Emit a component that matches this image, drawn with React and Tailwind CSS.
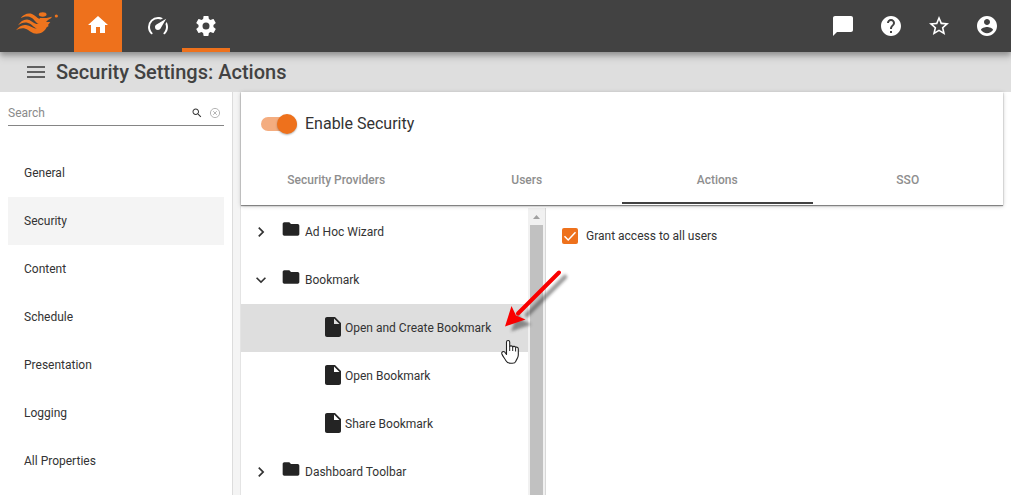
const ICONS = {
  home: 'M10 20v-6h4v6h5v-8h3L12 3 2 12h3v8z',
  gauge:
    'M12,16A3,3 0 0,1 9,13C9,11.88 9.61,10.9 10.5,10.39L20.21,4.77L14.68,14.35C14.18,15.33 13.17,16 12,16M12,3C13.81,3 15.5,3.5 16.97,4.32L14.87,5.53C14,5.19 13,5 12,5A8,8 0 0,0 4,13C4,15.21 4.89,17.21 6.34,18.65H6.35C6.74,19.04 6.74,19.67 6.35,20.06C5.96,20.45 5.32,20.45 4.93,20.07V20.07C3.12,18.26 2,15.76 2,13A10,10 0 0,1 12,3M22,13C22,15.76 20.88,18.26 19.07,20.07V20.07C18.68,20.45 18.05,20.45 17.66,20.06C17.27,19.67 17.27,19.04 17.66,18.65V18.65C19.11,17.2 20,15.21 20,13C20,12 19.81,11 19.46,10.1L20.67,8C21.5,9.5 22,11.18 22,13Z',
  gear:
    'M12,15.5A3.5,3.5 0 0,1 8.5,12A3.5,3.5 0 0,1 12,8.5A3.5,3.5 0 0,1 15.5,12A3.5,3.5 0 0,1 12,15.5M19.43,12.97C19.47,12.65 19.5,12.33 19.5,12C19.5,11.67 19.47,11.34 19.43,11L21.54,9.37C21.73,9.22 21.78,8.95 21.66,8.73L19.66,5.27C19.54,5.05 19.27,4.96 19.05,5.05L16.56,6.05C16.04,5.66 15.5,5.32 14.87,5.07L14.5,2.42C14.46,2.18 14.25,2 14,2H10C9.75,2 9.54,2.18 9.5,2.42L9.13,5.07C8.5,5.32 7.96,5.66 7.44,6.05L4.95,5.05C4.73,4.96 4.46,5.05 4.34,5.27L2.34,8.73C2.21,8.95 2.27,9.22 2.46,9.37L4.57,11C4.53,11.34 4.5,11.67 4.5,12C4.5,12.33 4.53,12.65 4.57,12.97L2.46,14.63C2.27,14.78 2.21,15.05 2.34,15.27L4.34,18.73C4.46,18.95 4.73,19.03 4.95,18.95L7.44,17.94C7.96,18.34 8.5,18.68 9.13,18.93L9.5,21.58C9.54,21.82 9.75,22 10,22H14C14.25,22 14.46,21.82 14.5,21.58L14.87,18.93C15.5,18.67 16.04,18.34 16.56,17.94L19.05,18.95C19.27,19.03 19.54,18.95 19.66,18.73L21.66,15.27C21.78,15.05 21.73,14.78 21.54,14.63L19.43,12.97Z',
  chat: 'M20 2H4c-1.1 0-1.99.9-1.99 2L2 22l4-4h14c1.1 0 2-.9 2-2V4c0-1.1-.9-2-2-2z',
  help:
    'M12 2C6.48 2 2 6.48 2 12s4.48 10 10 10 10-4.48 10-10S17.52 2 12 2zm1 17h-2v-2h2v2zm2.07-7.75l-.9.92C13.45 12.9 13 13.5 13 15h-2v-.5c0-1.1.45-2.1 1.17-2.83l1.24-1.26c.37-.36.59-.86.59-1.41 0-1.1-.9-2-2-2s-2 .9-2 2H8c0-2.21 1.79-4 4-4s4 1.79 4 4c0 .88-.36 1.68-.93 2.25z',
  star:
    'M22 9.24l-7.19-.62L12 2 9.19 8.63 2 9.24l5.46 4.73L5.82 21 12 17.27 18.18 21l-1.63-7.03L22 9.24zM12 15.4l-3.76 2.27 1-4.28-3.32-2.88 4.38-.38L12 6.1l1.71 4.04 4.38.38-3.32 2.88 1 4.28L12 15.4z',
  account:
    'M12 2C6.48 2 2 6.48 2 12s4.48 10 10 10 10-4.48 10-10S17.52 2 12 2zm0 3c1.66 0 3 1.34 3 3s-1.34 3-3 3-3-1.34-3-3 1.34-3 3-3zm0 14.2c-2.5 0-4.71-1.28-6-3.22.03-1.99 4-3.08 6-3.08 1.99 0 5.97 1.09 6 3.08-1.29 1.94-3.5 3.22-6 3.22z',
  menu: 'M3 18h18v-2H3v2zm0-5h18v-2H3v2zm0-7v2h18V6H3z',
  search:
    'M15.5 14h-.79l-.28-.27C15.41 12.59 16 11.11 16 9.5 16 5.91 13.09 3 9.5 3S3 5.91 3 9.5 5.91 16 9.5 16c1.61 0 3.09-.59 4.23-1.57l.27.28v.79l5 4.99L20.49 19l-4.99-5zm-6 0C7.01 14 5 11.99 5 9.5S7.01 5 9.5 5 14 7.01 14 9.5 11.99 14 9.5 14z',
  folder: 'M10 4H4c-1.1 0-1.99.9-1.99 2L2 18c0 1.1.9 2 2 2h16c1.1 0 2-.9 2-2V8c0-1.1-.9-2-2-2h-8l-2-2z',
  file: 'M6 2c-1.1 0-1.99.9-1.99 2L4 20c0 1.1.89 2 1.99 2H18c1.1 0 2-.9 2-2V8l-6-6H6zm7 7V3.5L18.5 9H13z',
  right: 'M8.59 16.59L13.17 12 8.59 7.41 10 6l6 6-6 6z',
  down: 'M7.41 8.59L12 13.17l4.59-4.58L18 10l-6 6-6-6z',
};

function Icon({ name, className = 'size-6' }) {
  return (
    <svg viewBox="0 0 24 24" fill="currentColor" className={`shrink-0 ${className}`}>
      <path d={ICONS[name]} />
    </svg>
  );
}

function Logo() {
  return (
    <svg viewBox="48 30 132 72" className="ml-4 mt-2.5 h-6 w-11 shrink-0" fill="#ee741d">
      <path d="M62 54C72 42 84 38 96 42C106 46 110 54 119 57L119 54L140 54L156 50L153 55L144 60L138 66L151 66L144 75L146 78L140 82C134 94 124 101 110 101C96 101 88 90 76 86C66 83 56 86 48 91C56 80 66 73 78 75C90 77 100 86 112 86C100 82 94 70 82 68C72 66 62 70 54 76C62 64 72 57 84 59C96 61 104 74 116 72C106 68 102 54 88 50C78 48 70 50 62 54Z" />
      <ellipse cx="128" cy="43.500" rx="11.500" ry="6.500" />
      <circle cx="169" cy="48" r="4.800" />
    </svg>
  );
}

function Header() {
  return (
    <header className="relative z-10 flex h-13 shrink-0 bg-[#424242] text-white shadow-[0_3px_5px_rgba(0,0,0,0.28),0_7px_7px_rgba(0,0,0,0.09)]">
      <div className="w-[74px]">
        <Logo />
      </div>
      <div className="flex w-12 justify-center bg-[#ee711c] pt-[13px]">
        <Icon name="home" />
      </div>
      <div className="ml-3 flex w-12 justify-center pt-3.5">
        <Icon name="gauge" />
      </div>
      <div className="flex w-12 justify-center border-b-4 border-[#ee711c] pt-3.5">
        <Icon name="gear" />
      </div>
      <div className="ml-auto flex gap-6 pr-3 pt-3.5">
        <Icon name="chat" />
        <Icon name="help" />
        <Icon name="star" />
        <Icon name="account" />
      </div>
    </header>
  );
}

const sections = ['General', 'Security', 'Content', 'Schedule', 'Presentation', 'Logging', 'All Properties'];

function Sidebar() {
  return (
    <aside className="w-[233px] shrink-0 border-r border-[#dcdcdc] bg-white pl-2 pr-2">
      <div className="flex h-[34px] items-center border-b border-[#858585] pt-2 text-[#8a8a8a]">
        <span className="grow">Search</span>
        <Icon name="search" className="mr-1.5 size-3 text-[#333]" />
        <svg viewBox="0 0 12 12" className="mr-[3px] size-3" fill="none" stroke="#b5b5b5">
          <circle cx="6" cy="6" r="4.600" />
          <path d="M4.200 4.200l3.600 3.600M7.800 4.200L4.200 7.800" />
        </svg>
      </div>
      <nav className="pt-[23px]">
        {sections.map((s) => (
          <div key={s} className={`flex h-12 items-center px-4 ${s === 'Security' ? 'bg-[#f4f4f4]' : ''}`}>
            {s}
          </div>
        ))}
      </nav>
    </aside>
  );
}

function Folder({ label, open }) {
  return (
    <div className="flex h-12 items-center pl-2.5">
      <Icon name={open ? 'down' : 'right'} className="size-5" />
      <Icon name="folder" className="-mt-1.5 ml-2.5 size-5 text-[#242424]" />
      <span className="ml-1">{label}</span>
    </div>
  );
}

function File({ label, selected }) {
  return (
    <div className={`flex h-12 items-center pl-20 ${selected ? 'bg-[#dedede]' : ''}`}>
      <Icon name="file" className="-mt-0.5 size-6 text-[#242424]" />
      <span>{label}</span>
    </div>
  );
}

function Tree() {
  return (
    <div className="flex w-[305px] shrink-0 border-r border-[#d8d8d8] bg-white">
      <div className="w-[288px]">
        <Folder label="Ad Hoc Wizard" />
        <Folder label="Bookmark" open />
        <File label="Open and Create Bookmark" selected />
        <File label="Open Bookmark" />
        <File label="Share Bookmark" />
        <Folder label="Dashboard Toolbar" />
      </div>
      <div className="flex grow flex-col items-center bg-[#f1f1f1]">
        <svg viewBox="0 0 17 17" className="size-[17px] shrink-0" fill="#a0a0a0">
          <path d="M5 11h7L8.500 7z" />
        </svg>
        <div className="w-[13px] grow bg-[#c1c1c1]" />
      </div>
    </div>
  );
}

const tabs = ['Security Providers', 'Users', 'Actions', 'SSO'];

function SecurityCard() {
  return (
    <section className="relative mr-2 flex h-[113px] shrink-0 flex-col bg-white pb-px shadow-[0_1px_1px_rgba(0,0,0,0.4),0_1px_4px_rgba(0,0,0,0.25)]">
      <div className="flex h-16 items-center pl-5">
        <div className="flex h-3.5 w-9 items-center justify-end rounded-full bg-[#f4ad80]">
          <div className="size-5 shrink-0 rounded-full bg-[#ee711c] shadow-[0_1px_2px_rgba(0,0,0,0.3)]" />
        </div>
        <span className="ml-2 text-base">Enable Security</span>
      </div>
      <div className="grid grow grid-cols-4 font-medium text-[#8e8e8e]">
        {tabs.map((t) => (
          <div
            key={t}
            className={`flex items-center justify-center border-b-2 pt-px ${t === 'Actions' ? 'border-[#424242]' : 'border-transparent'}`}
          >
            {t}
          </div>
        ))}
      </div>
    </section>
  );
}

function Annotation() {
  return (
    <svg viewBox="0 0 80 110" className="absolute left-[495px] top-[265px] z-20 h-[110px] w-20">
      <defs>
        <filter id="soft" x="-20%" y="-20%" width="150%" height="150%">
          <feGaussianBlur stdDeviation="1.500" />
        </filter>
      </defs>
      <g transform="translate(6 5)" filter="url(#soft)" opacity="0.5">
        <path d="M64 7L26 45" stroke="#333" strokeWidth="4.500" strokeLinecap="round" />
        <path d="M10 61.500L16.500 41.500l4 8 10 5z" fill="#333" />
      </g>
      <path d="M64 7.500L23 48.500" stroke="#f90000" strokeWidth="4" strokeLinecap="round" />
      <path d="M10 61.500L16.500 41l4.500 9.500 9.500 4z" fill="#f90000" />
      <path
        d="M11.500 89.500V77c0-2 3.200-2 3.200 0v4.500c.5-1 2.800-.8 3 .4.5-.9 2.700-.6 2.900.6.6-.7 2.700-.3 2.700 1.300v6.200c0 3-2 4.500-2.500 6.300-.5 1.500-1.500 2-3.500 2h-1.500c-2.500 0-4-.8-5-2.800-1-2.200-3-4-3.900-6.500-.7-2.200 1.500-3.200 3-1.800z"
        fill="white"
        stroke="#222"
        strokeWidth="1.100"
        strokeLinejoin="round"
      />
      <path d="M14.700 81.500v4.500M17.700 82v4M20.600 82.500v4" stroke="#222" strokeWidth="1" />
    </svg>
  );
}

export default function App() {
  return (
    <div className="relative flex h-[495px] w-[1011px] flex-col overflow-hidden bg-white font-['Roboto',sans-serif] text-xs text-[#333]">
      <Header />
      <div className="flex h-10 shrink-0 items-center bg-[#dedede] pl-6 text-[#424242]">
        <Icon name="menu" className="size-6 text-[#606060]" />
        <h1 className="ml-2 text-xl font-medium">Security Settings: Actions</h1>
      </div>
      <div className="flex min-h-0 grow">
        <Sidebar />
        <div className="w-2 shrink-0 border-r border-[#e4e4e4] bg-[#f4f4f4]" />
        <main className="flex min-w-0 grow flex-col">
          <SecurityCard />
          <div className="flex min-h-0 grow overflow-hidden pt-[3px]">
            <Tree />
            <div className="flex grow items-start pl-4 pt-5">
              <div className="flex size-4 items-center justify-center rounded-[2px] bg-[#ee711c]">
                <svg viewBox="0 0 16 16" className="size-4" fill="none" stroke="white" strokeWidth="1.500">
                  <path d="M2.500 8.300l3.700 3.700 7.300-7.800" />
                </svg>
              </div>
              <span className="ml-2">Grant access to all users</span>
            </div>
          </div>
        </main>
      </div>
      <Annotation />
    </div>
  );
}
